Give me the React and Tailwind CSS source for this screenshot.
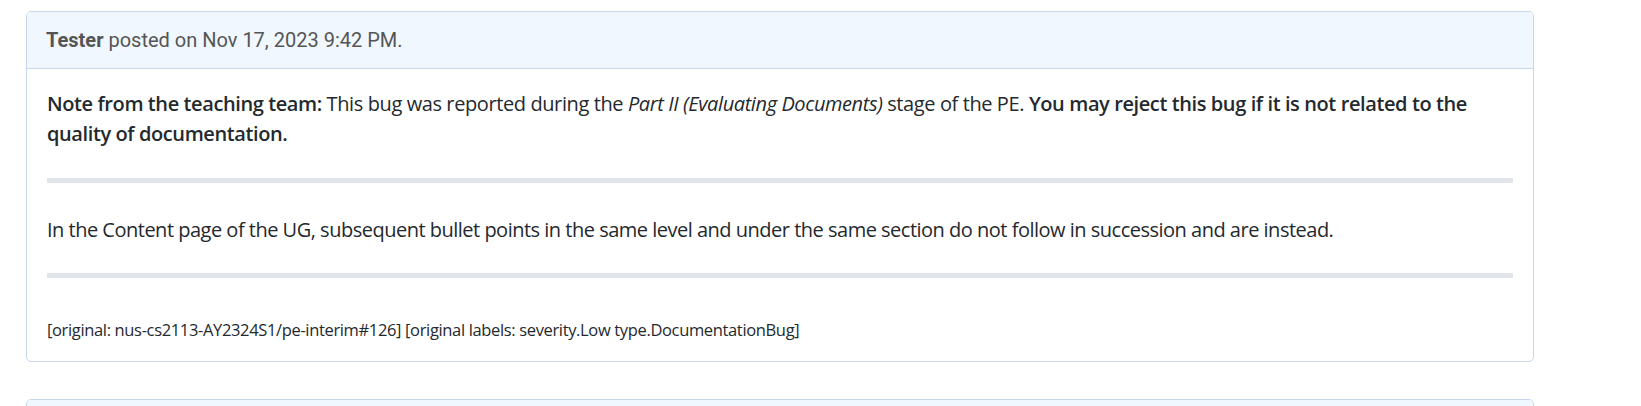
const Comment = ({ author, date, children }) => {
    return (
        <div className="w-[1508px] border border-[#c6d7ee] rounded-[5px] bg-white overflow-hidden">
            <div className="h-[57px] flex items-center px-[19px] bg-[#f0f7ff] border-b border-[#c6d7ee] text-[20px] text-[#555] font-['Roboto',sans-serif]">
                {author && <span className="font-bold">{author}</span>}
                {date && <span>&nbsp;posted on {date}.</span>}
            </div>
            {children}
        </div>
    )
}

export default function App() {
    return (
        <div className="bg-white min-h-screen pl-[26px] pt-[11px] pb-10">
            <Comment author="Tester" date="Nov 17, 2023 9:42 PM">
                <div className="px-[20px] pt-[20px] pb-[18px] text-[#24292e] font-['Open_Sans',sans-serif]">
                    <p className="text-[20px] leading-[30px] tracking-[-0.4px]">
                        <strong className="font-semibold">Note from the teaching team:</strong> This bug was reported during the{' '}
                        <em>Part II (Evaluating Documents)</em> stage of the PE.{' '}
                        <strong className="font-semibold">You may reject this bug if it is not related to the quality of documentation.</strong>
                    </p>
                    <hr className="h-[5px] bg-[#e1e4e8] border-0 mt-[29px] mb-[32px]" />
                    <p className="text-[20px] leading-[30px] tracking-[-0.5px]">
                        In the Content page of the UG, subsequent bullet points in the same level and under the same section do not follow in succession and are instead.
                    </p>
                    <hr className="h-[5px] bg-[#e1e4e8] border-0 mt-[28px] mb-[39px]" />
                    <p className="text-[16.5px] leading-[26px] tracking-[-0.35px]">
                        [original: nus-cs2113-AY2324S1/pe-interim#126] [original labels: severity.Low type.DocumentationBug]
                    </p>
                </div>
            </Comment>
            <div className="mt-[37px]">
                <Comment>
                    <div className="h-[40px]" />
                </Comment>
            </div>
        </div>
    )
}
